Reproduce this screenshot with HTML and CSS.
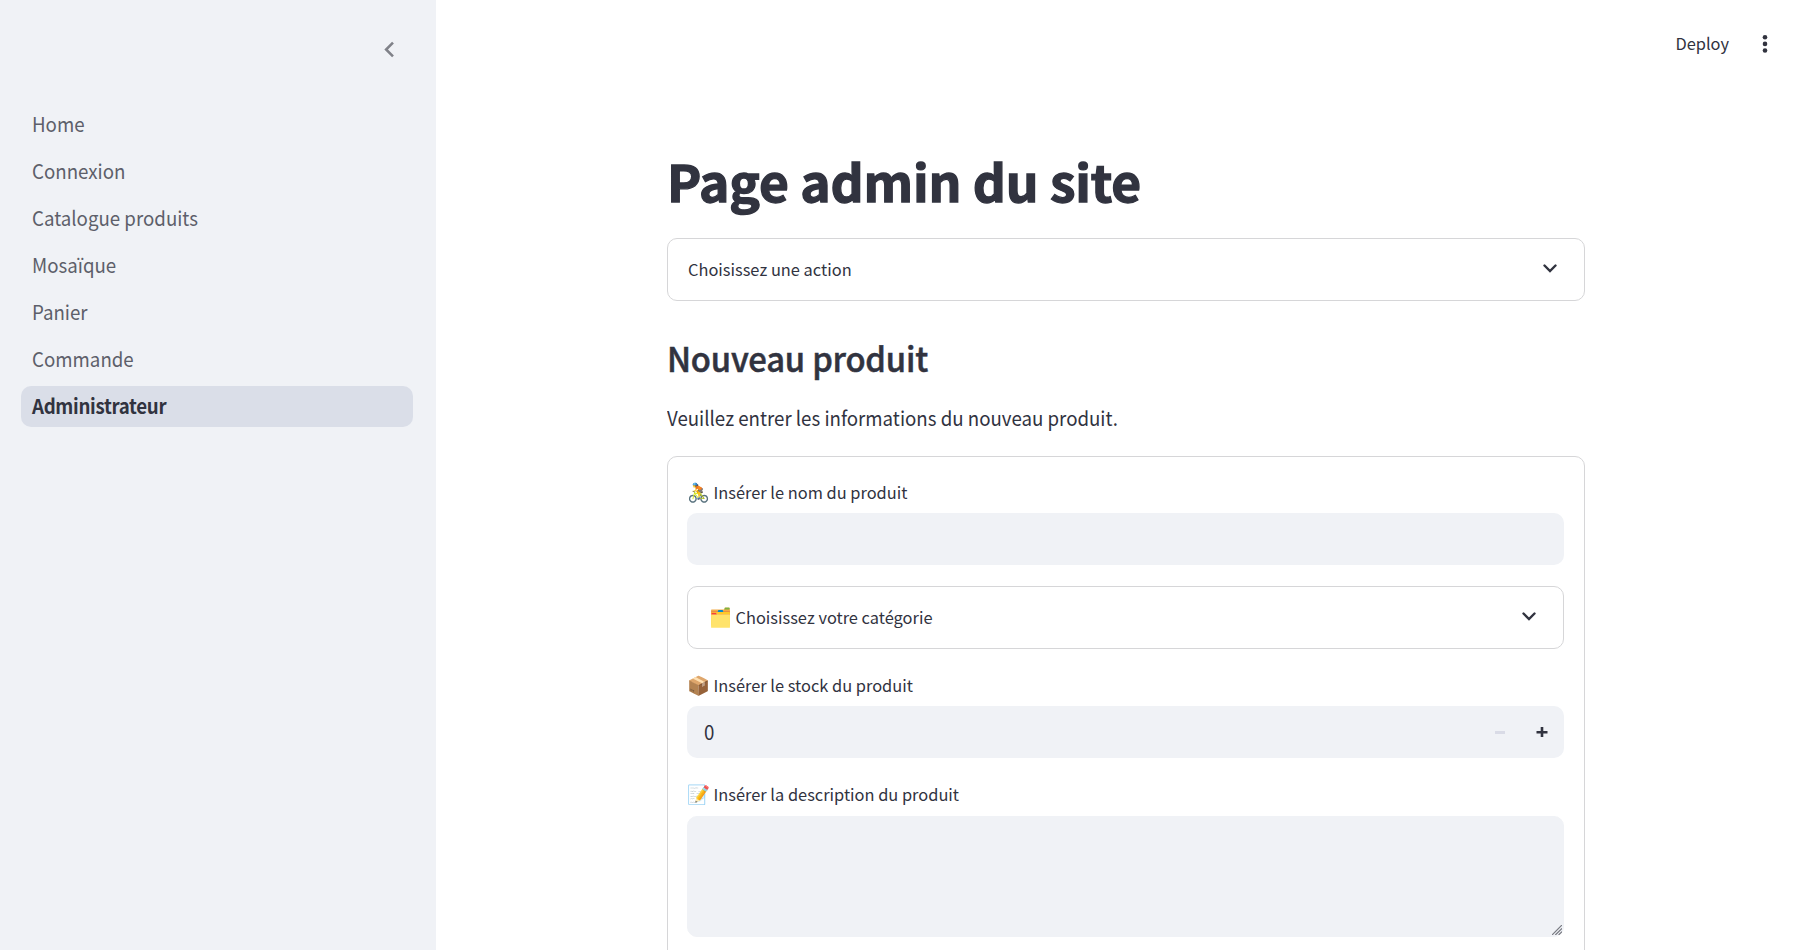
FILE: index.html
```html
<!DOCTYPE html>
<html lang="fr">
<head>
<meta charset="utf-8">
<title>Administrateur</title>
<link rel="stylesheet" href="styles.css">
</head>
<body>
<div class="app">
  <aside class="sidebar">
    <div class="sidebar-head">
      <svg class="collapse" viewBox="0 0 24 24"><path d="M15.41 7.41 14 6l-6 6 6 6 1.41-1.41L10.83 12z"/></svg>
    </div>
    <nav class="nav">
      <a class="nav-item"><span class="tall">Home</span></a>
      <a class="nav-item"><span class="tall">Connexion</span></a>
      <a class="nav-item"><span class="tall">Catalogue produits</span></a>
      <a class="nav-item"><span class="tall">Mosaïque</span></a>
      <a class="nav-item"><span class="tall">Panier</span></a>
      <a class="nav-item"><span class="tall">Commande</span></a>
      <a class="nav-item active"><span class="tall">Administrateur</span></a>
    </nav>
  </aside>
  <div class="page">
    <header class="toolbar">
      <span class="deploy">Deploy</span>
      <svg class="menu" viewBox="0 0 6 20"><circle cx="3" cy="3.300" r="2.300"/><circle cx="3" cy="9.900" r="2.300"/><circle cx="3" cy="16.500" r="2.300"/></svg>
    </header>
    <main class="content">
      <h1 class="title"><span class="tall">Page admin du site</span></h1>
      <div class="expander">
        <span class="label">Choisissez une action</span>
        <svg class="chevron" viewBox="0 0 14 10"><path d="M1.500 1.500 7 7l5.500-5.500"/></svg>
      </div>
      <h3 class="subtitle"><span class="tall">Nouveau produit</span></h3>
      <p class="intro"><span class="tall">Veuillez entrer les informations du nouveau produit.</span></p>
      <form class="form">
        <div class="field-label"><span class="emoji">🚴</span><span class="label">Insérer le nom du produit</span></div>
        <div class="input"></div>
        <div class="expander inner">
          <span class="emoji">🗂️</span><span class="label">Choisissez votre catégorie</span>
          <svg class="chevron" viewBox="0 0 14 10"><path d="M1.500 1.500 7 7l5.500-5.500"/></svg>
        </div>
        <div class="field-label stock"><span class="emoji">📦</span><span class="label">Insérer le stock du produit</span></div>
        <div class="input number">
          <span class="value"><span class="tall">0</span></span>
          <svg class="step minus" viewBox="0 0 12 12"><path d="M1 5h10v3H1z"/></svg>
          <svg class="step" viewBox="0 0 12 12"><path d="M.5 5H4.700V1h2.600v4h4.200v2.600H7.300V11H4.700V7.600H.5z"/></svg>
        </div>
        <div class="field-label desc"><span class="emoji">📝</span><span class="label">Insérer la description du produit</span></div>
        <div class="textarea-wrap">
          <textarea class="textarea"></textarea>
          <svg class="grip" viewBox="0 0 10 10"><path d="M0 10 10 0M3.300 10 10 3.300M6.600 10 10 6.600"/></svg>
        </div>
      </form>
    </main>
  </div>
</div>
</body>
</html>
```
FILE: styles.css
```css
* { box-sizing: border-box; }
body {
  margin: 0;
  height: 950px;
  overflow: hidden;
  background: #fff;
  color: #31333f;
  font-family: "Noto Sans CJK SC", "Noto Color Emoji", sans-serif;
}
.app { display: flex; height: 950px; }
.sidebar { width: 436px; background: #f0f2f6; padding: 0 23px 0 21px; flex: none; }
.sidebar-head { height: 104px; display: flex; justify-content: flex-end; padding: 34px 8px 0 0; }
.collapse { width: 31px; height: 31px; fill: #808289; }
.nav { display: flex; flex-direction: column; gap: 6px; }
.nav-item {
  height: 41px;
  padding-left: 11px;
  line-height: 38px;
  font-size: 18.700px;
  color: #5d5f6a;
  border-radius: 10px;
}
.tall { display: inline-block; transform: scaleY(1.080); }
.active { background: #dadee8; color: #31333f; font-weight: 600; letter-spacing: -.320px; }
.page { flex: 1; overflow: hidden; }
.toolbar {
  height: 88px;
  display: flex;
  align-items: center;
  justify-content: flex-end;
  padding-right: 40px;
  gap: 33px;
}
.deploy { font-size: 16.400px; padding-bottom: 2px; }
.menu { width: 6px; height: 20px; fill: #31333f; }
.content { width: 918px; margin-left: 231px; padding-top: 57px; }
.title {
  margin: 0;
  height: 93px;
  line-height: 72px;
  font-size: 51.500px;
  font-weight: 700;
  letter-spacing: -.170px;
  -webkit-text-stroke: 1.300px #31333f;
  white-space: nowrap;
}
.title .tall { transform: scaleY(.965); }
.expander {
  height: 63px;
  border: 1px solid #d6d6d8;
  border-radius: 10px;
  display: flex;
  align-items: center;
  padding: 0 27px 2px 20px;
}
.label { font-size: 16.400px; line-height: 24px; white-space: nowrap; }
.chevron { width: 14px; height: 10px; margin-left: auto; fill: none; stroke: #31333f; stroke-width: 2.400; stroke-linecap: round; }
.subtitle { margin: 30px 0 0; height: 56px; line-height: 54px; font-size: 32.800px; font-weight: 500; letter-spacing: -.220px; -webkit-text-stroke: .500px #31333f; }
.subtitle .tall { transform: scaleY(1.030); }
.intro { margin: 15px 0 0; height: 32px; line-height: 30px; font-size: 18.680px; white-space: nowrap; }
.form {
  margin: 22px 0 0;
  height: 600px;
  border: 1px solid #d6d6d8;
  border-radius: 10px;
  padding: 23px 20px 0 19px;
}
.field-label { height: 33px; display: flex; align-items: flex-start; }
.emoji { width: 26.500px; font-size: 18.500px; line-height: 23px; white-space: nowrap; flex: none; }
.input { height: 52px; background: #f0f2f6; border-radius: 10px; }
.inner { margin-top: 21px; padding: 0 27px 2px 21px; }
.stock { margin-top: 24px; }
.number { display: flex; align-items: center; padding: 0 16px 0 17px; gap: 30px; }
.value { font-size: 18.700px; margin-right: auto; padding-bottom: 4px; }
.step { width: 12px; height: 12px; fill: #31333f; }
.minus { fill: #d9dbe6; }
.desc { margin-top: 24px; height: 34px; }
.textarea-wrap { position: relative; }
.textarea {
  display: block;
  width: 100%;
  height: 121px;
  border: 1px solid #f0f2f6;
  background: #f0f2f6;
  border-radius: 10px;
  resize: none;
  outline: none;
}
.grip { position: absolute; right: 2px; bottom: 2px; width: 10px; height: 10px; stroke: #777981; stroke-width: 1.200; fill: none; }
```
